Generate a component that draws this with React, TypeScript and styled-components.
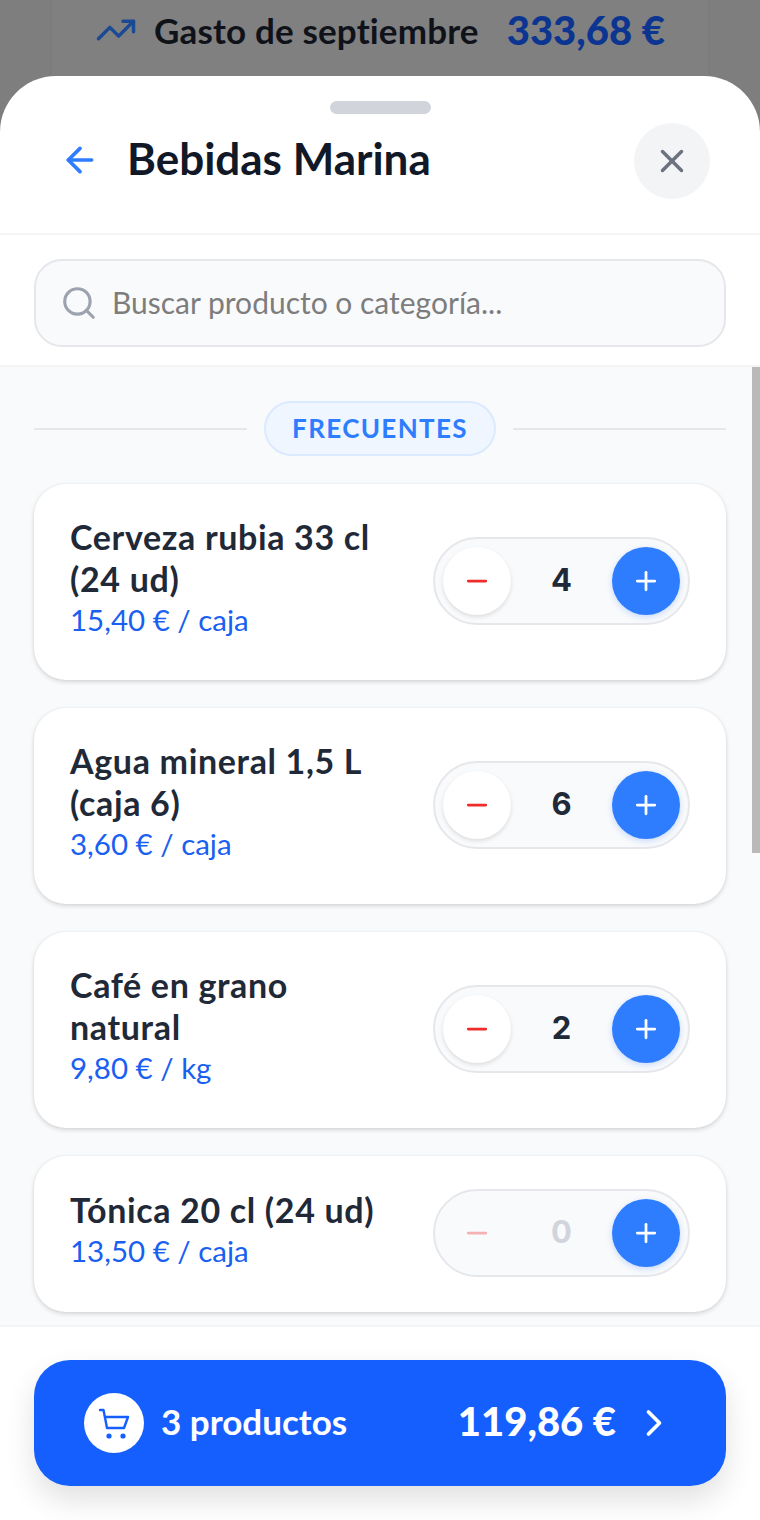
import React from 'react';
import styled, { createGlobalStyle } from 'styled-components';
import {
  ArrowLeft,
  ChevronRight,
  Minus,
  Plus,
  Search,
  TrendingUp,
  X,
} from 'lucide-react';

const GlobalStyle = createGlobalStyle`
  html, body {
    margin: 0;
    padding: 0;
    background: #808080;
    font-family: 'Lato', 'Noto Sans', sans-serif;
  }
  * {
    box-sizing: border-box;
  }
`;

const Screen = styled.div`
  position: relative;
  display: flex;
  flex-direction: column;
  width: 760px;
  height: 1520px;
  overflow: hidden;
  background: #7e7e7e;
`;

const Backdrop = styled.div`
  display: flex;
  justify-content: center;
  height: 76px;
  margin: 0 50px;
  padding: 8px 0 0 0;
  background: #808080;
  border-left: 2px solid #7c7c7c;
  border-right: 2px solid #7c7c7c;
`;

const SpendRow = styled.div`
  display: flex;
  align-items: center;
  height: 44px;
  color: #0f1319;
`;

const SpendLabel = styled.span`
  margin-left: 17px;
  font-size: 35px;
  font-weight: 700;
  letter-spacing: 0.15px;
`;

const SpendValue = styled.span`
  margin-left: 28px;
  font-size: 40px;
  font-weight: 900;
  color: #0b3590;
`;

const Sheet = styled.div`
  flex: 1;
  display: flex;
  flex-direction: column;
  min-height: 0;
  background: #fff;
  border-radius: 56px 56px 0 0;
`;

const Handle = styled.div`
  align-self: center;
  width: 101px;
  height: 13px;
  margin-top: 25px;
  border-radius: 7px;
  background: #d1d5db;
`;

const Header = styled.header`
  display: flex;
  align-items: center;
  height: 121px;
  padding: 0 50px 26px 60px;
  border-bottom: 2px solid #f3f4f6;
`;

const BackButton = styled.div`
  display: flex;
  margin-bottom: 2px;
  color: #2e7dff;
`;

const Title = styled.h1`
  flex: 1;
  margin: 0 0 6px 27px;
  font-size: 44px;
  font-weight: 700;
  color: #111827;
`;

const CloseButton = styled.div`
  display: flex;
  align-items: center;
  justify-content: center;
  width: 76px;
  height: 76px;
  border-radius: 50%;
  background: #f3f4f6;
  color: #6b7280;
`;

const SearchSection = styled.div`
  padding: 24px 34px 18px;
  border-bottom: 2px solid #f3f4f6;
`;

const SearchBox = styled.div`
  display: flex;
  align-items: center;
  gap: 14px;
  height: 88px;
  padding: 0 24px 0 24px;
  border: 2px solid #e5e7eb;
  border-radius: 28px;
  background: #f9fafb;
  color: #9ca3af;
`;

const Placeholder = styled.span`
  margin-bottom: 2px;
  font-size: 30px;
  color: #7d7d7d;
`;

const List = styled.div`
  position: relative;
  flex: 1;
  display: flex;
  flex-direction: column;
  gap: 28px;
  min-height: 0;
  padding: 34px 34px 0;
  overflow: hidden;
  background: #f9fafb;
`;

const Scrollbar = styled.div`
  position: absolute;
  top: 0;
  right: 0;
  width: 8px;
  height: 486px;
  background: #b9b9b9;
`;

const SectionDivider = styled.div`
  display: flex;
  align-items: center;
  gap: 17px;
  height: 55px;
`;

const Rule = styled.div`
  flex: 1;
  height: 2px;
  background: #e5e7eb;
`;

const SectionBadge = styled.div`
  display: flex;
  align-items: center;
  height: 55px;
  padding: 0 26px 2px;
  border: 2px solid #dbeafe;
  border-radius: 28px;
  background: #eff6ff;
  color: #2e7dff;
  font-size: 26px;
  font-weight: 700;
  letter-spacing: 1.35px;
`;

const Card = styled.div<{ $short?: boolean }>`
  flex: none;
  display: flex;
  align-items: center;
  justify-content: space-between;
  height: ${(p) => (p.$short ? 156 : 196)}px;
  padding: 0 36px 2px;
  border-radius: 32px;
  background: #fff;
  box-shadow:
    0 2px 5px rgba(0, 0, 0, 0.14),
    0 0 3px rgba(0, 0, 0, 0.06);
`;

const ProductInfo = styled.div`
  width: 330px;
  margin-bottom: 6px;
`;

const ProductName = styled.div`
  font-size: 34px;
  font-weight: 700;
  line-height: 42px;
  letter-spacing: 0.65px;
  color: #1f2937;
`;

const ProductPrice = styled.div`
  font-size: 29.5px;
  line-height: 40px;
  color: #1a60f0;
`;

const Stepper = styled.div`
  display: flex;
  align-items: center;
  justify-content: space-between;
  width: 257px;
  height: 88px;
  padding: 0 8px;
  border: 2px solid #e5e7eb;
  border-radius: 44px;
  background: #f9fafb;
`;

const MinusButton = styled.div<{ $disabled: boolean }>`
  display: flex;
  align-items: center;
  justify-content: center;
  width: 68px;
  height: 68px;
  border-radius: 50%;
  color: ${(p) => (p.$disabled ? '#f4b1b1' : '#ef2b2b')};
  background: ${(p) => (p.$disabled ? 'transparent' : '#fff')};
  box-shadow: ${(p) =>
    p.$disabled ? 'none' : '0 2px 4px rgba(0, 0, 0, 0.12)'};
`;

const Quantity = styled.span<{ $disabled: boolean }>`
  margin-bottom: 4px;
  font-family: 'Inter', sans-serif;
  font-size: 31px;
  font-weight: 700;
  color: ${(p) => (p.$disabled ? '#d1d5db' : '#1f2937')};
`;

const PlusButton = styled.div`
  display: flex;
  align-items: center;
  justify-content: center;
  width: 68px;
  height: 68px;
  border-radius: 50%;
  background: #2e7dff;
  color: #fff;
  box-shadow: 0 2px 6px rgba(46, 125, 255, 0.25);
`;

const Footer = styled.footer`
  height: 195px;
  padding: 33px 34px 0;
  border-top: 2px solid #f3f4f6;
  background: #fff;
`;

const CheckoutButton = styled.div`
  display: flex;
  align-items: center;
  height: 126px;
  padding: 0 50px;
  border-radius: 36px;
  background: #155fff;
  color: #fff;
  box-shadow: 0 14px 30px rgba(0, 0, 0, 0.12);
`;

const CartBadge = styled.div`
  display: flex;
  align-items: center;
  justify-content: center;
  width: 60px;
  height: 60px;
  border-radius: 50%;
  background: #fff;
  color: #155fff;
`;

const CartCount = styled.span`
  flex: 1;
  margin: 0 0 4px 17px;
  font-size: 35px;
  font-weight: 700;
`;

const CartTotal = styled.span`
  margin: 0 16px 4px 0;
  font-size: 40px;
  font-weight: 900;
`;

const CartIcon = () => (
  <svg width="38" height="38" viewBox="0 0 38 38" fill="none">
    <path
      d="M5 6h3.5L12 24h17l4-11H10"
      stroke="currentColor"
      strokeWidth="2.4"
      strokeLinecap="round"
      strokeLinejoin="round"
    />
    <circle cx="14" cy="32" r="2.6" fill="currentColor" />
    <circle cx="28" cy="32" r="2.6" fill="currentColor" />
  </svg>
);

const products = [
  { name: ['Cerveza rubia 33 cl', '(24 ud)'], price: '15,40 € / caja', qty: 4 },
  { name: ['Agua mineral 1,5 L', '(caja 6)'], price: '3,60 € / caja', qty: 6 },
  { name: ['Café en grano', 'natural'], price: '9,80 € / kg', qty: 2 },
  { name: ['Tónica 20 cl (24 ud)'], price: '13,50 € / caja', qty: 0 },
];

export default function App() {
  return (
    <Screen>
      <GlobalStyle />
      <Backdrop>
        <SpendRow>
          <TrendingUp size={42} color="#1a4a94" strokeWidth={2} />
          <SpendLabel>Gasto de septiembre</SpendLabel>
          <SpendValue>333,68 €</SpendValue>
        </SpendRow>
      </Backdrop>
      <Sheet>
        <Handle />
        <Header>
          <BackButton>
            <ArrowLeft size={40} strokeWidth={2.2} />
          </BackButton>
          <Title>Bebidas Marina</Title>
          <CloseButton>
            <X size={38} strokeWidth={2.2} />
          </CloseButton>
        </Header>
        <SearchSection>
          <SearchBox>
            <Search size={38} strokeWidth={2} />
            <Placeholder>Buscar producto o categoría...</Placeholder>
          </SearchBox>
        </SearchSection>
        <List>
          <SectionDivider>
            <Rule />
            <SectionBadge>FRECUENTES</SectionBadge>
            <Rule />
          </SectionDivider>
          {products.map((p) => (
            <Card key={p.price} $short={p.name.length === 1}>
              <ProductInfo>
                {p.name.map((line) => (
                  <ProductName key={line}>{line}</ProductName>
                ))}
                <ProductPrice>{p.price}</ProductPrice>
              </ProductInfo>
              <Stepper>
                <MinusButton $disabled={p.qty === 0}>
                  <Minus size={30} strokeWidth={2.2} />
                </MinusButton>
                <Quantity $disabled={p.qty === 0}>{p.qty}</Quantity>
                <PlusButton>
                  <Plus size={30} strokeWidth={2.2} />
                </PlusButton>
              </Stepper>
            </Card>
          ))}
          <Scrollbar />
        </List>
        <Footer>
          <CheckoutButton>
            <CartBadge>
              <CartIcon />
            </CartBadge>
            <CartCount>3 productos</CartCount>
            <CartTotal>119,86 €</CartTotal>
            <ChevronRight size={44} strokeWidth={2} />
          </CheckoutButton>
        </Footer>
      </Sheet>
    </Screen>
  );
}
